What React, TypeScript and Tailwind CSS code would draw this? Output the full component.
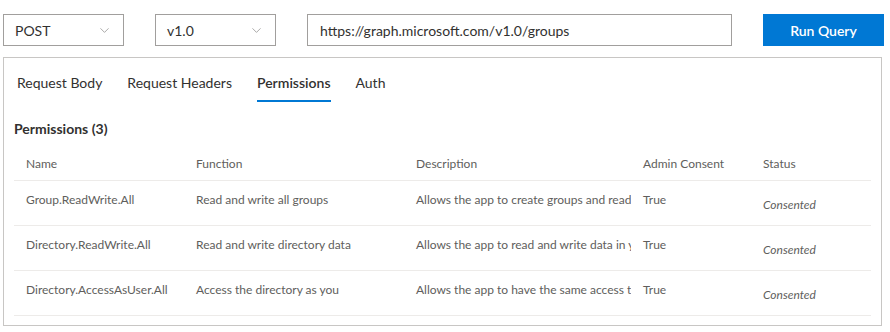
import { ChevronDown } from "lucide-react";

const rows = [
  {
    name: "Group.ReadWrite.All",
    fn: "Read and write all groups",
    desc: "Allows the app to create groups and read all group properties and memberships on behalf of the signed-in user.",
  },
  {
    name: "Directory.ReadWrite.All",
    fn: "Read and write directory data",
    desc: "Allows the app to read and write data in your organization's directory, such as users, and groups.",
  },
  {
    name: "Directory.AccessAsUser.All",
    fn: "Access the directory as you",
    desc: "Allows the app to have the same access to information in the directory as you do.",
  },
];

const tabs = ["Request Body", "Request Headers", "Permissions", "Auth"];

function Dropdown({ value }: { value: string }) {
  return (
    <div className="flex h-[32px] w-[121px] items-center justify-between border border-[#a19f9d] pl-[11px] pr-[11px] text-[14px] text-[#323130]">
      <span>{value}</span>
      <ChevronDown className="h-[15px] w-[15px] text-[#797775]" strokeWidth={1} />
    </div>
  );
}

export default function App() {
  return (
    <div
      className="h-[332px] w-[890px] bg-white px-[3px] pt-[14px]"
      style={{ fontFamily: '"Segoe UI", Lato, sans-serif' }}
    >
      <div className="flex items-center">
        <Dropdown value="POST" />
        <div className="ml-[31px]">
          <Dropdown value="v1.0" />
        </div>
        <div className="ml-[31px] flex h-[32px] w-[425px] items-center border border-[#a19f9d] px-[12px] text-[14px] text-[#323130]">
          https://graph.microsoft.com/v1.0/groups
        </div>
        <button className="ml-[31px] h-[32px] w-[121px] bg-[#0078d4] text-[14px] font-semibold text-white">
          Run Query
        </button>
      </div>

      <div className="mt-[11px] h-[269px] w-[879px] border border-[#c8c6c4] px-[10px]">
        <div className="flex gap-[25px] pl-[3px] pt-[14px] text-[14px] text-[#323130]">
          {tabs.map((t) => (
            <div key={t} className="flex flex-col">
              <span className={t === "Permissions" ? "font-semibold" : ""}>{t}</span>
              <span
                className={`mt-[7px] h-[2px] ${t === "Permissions" ? "bg-[#0078d4]" : "bg-transparent"}`}
              />
            </div>
          ))}
        </div>

        <div className="mt-[16px] text-[14px] font-bold text-[#323130]">Permissions (3)</div>

        <div className="mt-[9px] text-[12px] text-[#605e5c]">
          <div className="grid h-[33px] grid-cols-[170px_220px_227px_120px_121px] items-center border-b border-[#edebe9]">
            <div className="pl-[12px]">Name</div>
            <div className="pl-[12px]">Function</div>
            <div className="pl-[12px]">Description</div>
            <div className="pl-[12px]">Admin Consent</div>
            <div className="pl-[12px]">Status</div>
          </div>
          {rows.map((r) => (
            <div
              key={r.name}
              className="grid h-[45px] grid-cols-[170px_220px_227px_120px_121px] border-b border-[#edebe9] pt-[10px]"
            >
              <div className="pl-[12px]">{r.name}</div>
              <div className="pl-[12px]">{r.fn}</div>
              <div className="overflow-hidden whitespace-nowrap pl-[12px]">{r.desc}</div>
              <div className="pl-[12px]">True</div>
              <div className="pl-[12px] pt-[5px] italic">Consented</div>
            </div>
          ))}
        </div>
      </div>
    </div>
  );
}
